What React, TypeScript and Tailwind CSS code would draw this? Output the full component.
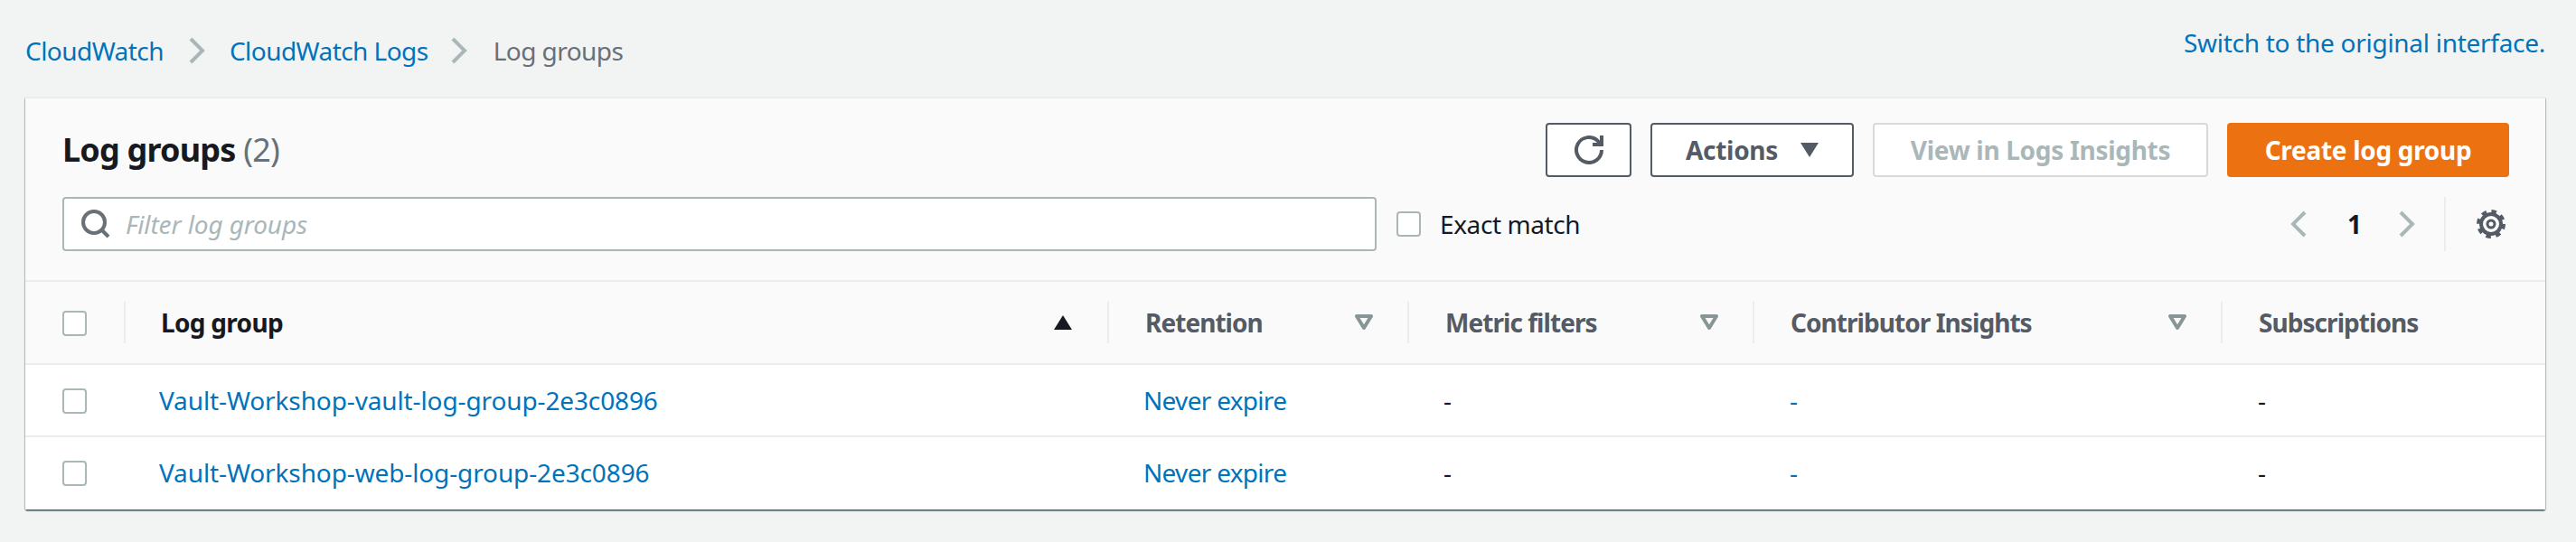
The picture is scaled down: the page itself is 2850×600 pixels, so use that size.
const FONT = "font-['Noto_Sans',sans-serif]";
const GRID = "grid grid-cols-[109px_1088px_332px_382px_518px_1fr]";

const Chevron = ({ left, className }: { left?: boolean; className: string }) => (
  <svg viewBox="0 0 18 30" fill="none" stroke="currentColor" strokeWidth="4" className={className}>
    <path d={left ? "M16 2 3 15l13 13" : "M2 2l13 13L2 28"} />
  </svg>
);

const Checkbox = () => (
  <div className="w-[27px] h-[28px] bg-white border-2 border-[#aab7b8] rounded-[4px]" />
);

const Filter = () => (
  <svg viewBox="0 0 22 18" className="w-[22px] h-[18px] text-[#879596]" fill="none" stroke="currentColor" strokeWidth="4">
    <path d="M3 2h16L11 15z" strokeLinejoin="round" />
  </svg>
);

const HeaderCell = ({ label, filter = true }: { label: string; filter?: boolean }) => (
  <div className="h-[46px] border-l-2 border-[#eaeded] pl-[40px] pr-[37px] flex items-center justify-between">
    <span className="font-bold text-[#545b64] tracking-[-0.95px]">{label}</span>
    {filter && <Filter />}
  </div>
);

const Row = ({ name, height }: { name: string; height: string }) => (
  <div className={`${GRID} ${height} items-start pt-[19px] border-t-2 border-[#eaeded] bg-white`}>
    <div className="pl-[41px] pt-[7px]">
      <Checkbox />
    </div>
    <a className="pl-[39px] text-[#0073bb]">{name}</a>
    <a className="pl-[40px] text-[#0073bb] tracking-[-0.7px]">Never expire</a>
    <span className="pl-[40px] text-[#16191f]">-</span>
    <a className="pl-[41px] text-[#0073bb]">-</a>
    <span className="pl-[41px] text-[#16191f]">-</span>
  </div>
);

export default function App() {
  return (
    <div className={`${FONT} w-[2850px] h-[600px] bg-[#f2f3f3] pl-[28px] pr-[34px] text-[28px] leading-[40px] tracking-[-0.12px] text-[#16191f]`}>
      <div className="h-[107px] flex items-start justify-between">
        <nav className="flex items-center mt-[36px] h-[40px] tracking-[-0.55px]">
          <a className="text-[#0073bb]">CloudWatch</a>
          <Chevron className="w-[18px] h-[30px] ml-[28px] mr-[27px] text-[#aab7b8]" />
          <a className="text-[#0073bb]">CloudWatch Logs</a>
          <Chevron className="w-[18px] h-[30px] ml-[25px] mr-[29px] text-[#aab7b8]" />
          <span className="text-[#687078]">Log groups</span>
        </nav>
        <a className="mt-[27px] text-[#0073bb] tracking-[-0.28px]">Switch to the original interface.</a>
      </div>

      <div className="rounded-[2px] bg-white shadow-[0_2px_1px_0_rgba(0,28,36,0.45),1px_1px_1px_0_rgba(0,28,36,0.25),-1px_1px_1px_0_rgba(0,28,36,0.25)]">
        <div className="h-[203px] bg-[#fafafa] pt-[27px] pl-[41px] pr-[40px] border-t-2 border-[#eaeded]">
          <div className="flex items-center justify-between h-[60px]">
            <h1 className="text-[36px] tracking-[-0.8px] font-bold">
              Log groups <span className="font-normal text-[#687078]">(2)</span>
            </h1>
            <div className="flex items-center gap-[21px] font-bold tracking-[-0.3px]">
              <button className="w-[95px] h-[60px] bg-white border-2 border-[#545b64] rounded-[4px] flex items-center justify-center">
                <svg viewBox="0 0 16 16" fill="none" stroke="#545b64" strokeWidth="2" className="w-[32px] h-[32px]">
                  <path d="M10 5h5V0" />
                  <path d="M15 8a7 7 0 1 1-2.05-4.95L15 5" />
                </svg>
              </button>
              <button className="w-[225px] h-[60px] bg-white border-2 border-[#545b64] rounded-[4px] text-[#545b64] flex items-center justify-center gap-[25px]">
                Actions
                <svg viewBox="0 0 20 16" className="w-[20px] h-[16px]" fill="#545b64">
                  <path d="M0 0h20L10 16z" />
                </svg>
              </button>
              <button className="w-[371px] h-[60px] bg-white border-2 border-[#d5dbdb] rounded-[4px] text-[#aab7b8]">
                View in Logs Insights
              </button>
              <button className="w-[312px] h-[60px] bg-[#ec7211] rounded-[4px] text-white">Create log group</button>
            </div>
          </div>

          <div className="flex items-center mt-[22px] h-[60px]">
            <div className="w-[1454px] h-[60px] bg-white border-2 border-[#aab7b8] rounded-[4px] flex items-center pl-[19px] gap-[17px]">
              <svg viewBox="0 0 16 16" fill="none" stroke="#687078" strokeWidth="2" className="w-[32px] h-[32px]">
                <circle cx="7" cy="7" r="6" />
                <path d="M11 11l4 4" />
              </svg>
              <span className="italic text-[#aab7b8]">Filter log groups</span>
            </div>
            <div className="ml-[22px] flex items-center gap-[21px]">
              <Checkbox />
              <span className="tracking-[-0.4px]">Exact match</span>
            </div>
            <div className="ml-auto mr-[4px] flex items-center">
              <Chevron left className="w-[18px] h-[30px] text-[#aab7b8]" />
              <span className="ml-[45px] w-[12px] font-bold">1</span>
              <Chevron className="w-[18px] h-[30px] ml-[45px] text-[#aab7b8]" />
              <div className="ml-[32px] h-[60px] border-l-2 border-[#eaeded]" />
              <svg viewBox="0 0 32 32" fill="none" stroke="#545b64" className="ml-[34px] w-[32px] h-[32px]">
                <circle cx="16" cy="16" r="11" strokeWidth="4" />
                <circle cx="16" cy="16" r="14" strokeWidth="4" strokeDasharray="5.5 5.5" />
                <circle cx="16" cy="16" r="4" strokeWidth="3" />
              </svg>
            </div>
          </div>
        </div>

        <div className={`${GRID} h-[92px] items-center bg-[#fafafa] border-t-2 border-[#eaeded]`}>
          <div className="pl-[41px] pt-[2px]">
            <Checkbox />
          </div>
          <div className="h-[46px] border-l-2 border-[#eaeded] pl-[39px] pr-[39px] flex items-center justify-between">
            <span className="font-bold tracking-[-0.7px]">Log group</span>
            <svg viewBox="0 0 20 16" className="w-[20px] h-[16px]" fill="#16191f">
              <path d="M10 0l10 16H0z" />
            </svg>
          </div>
          <HeaderCell label="Retention" />
          <HeaderCell label="Metric filters" />
          <HeaderCell label="Contributor Insights" />
          <HeaderCell label="Subscriptions" filter={false} />
        </div>

        <Row name="Vault-Workshop-vault-log-group-2e3c0896" height="h-[80px]" />
        <Row name="Vault-Workshop-web-log-group-2e3c0896" height="h-[82px]" />
      </div>
    </div>
  );
}
